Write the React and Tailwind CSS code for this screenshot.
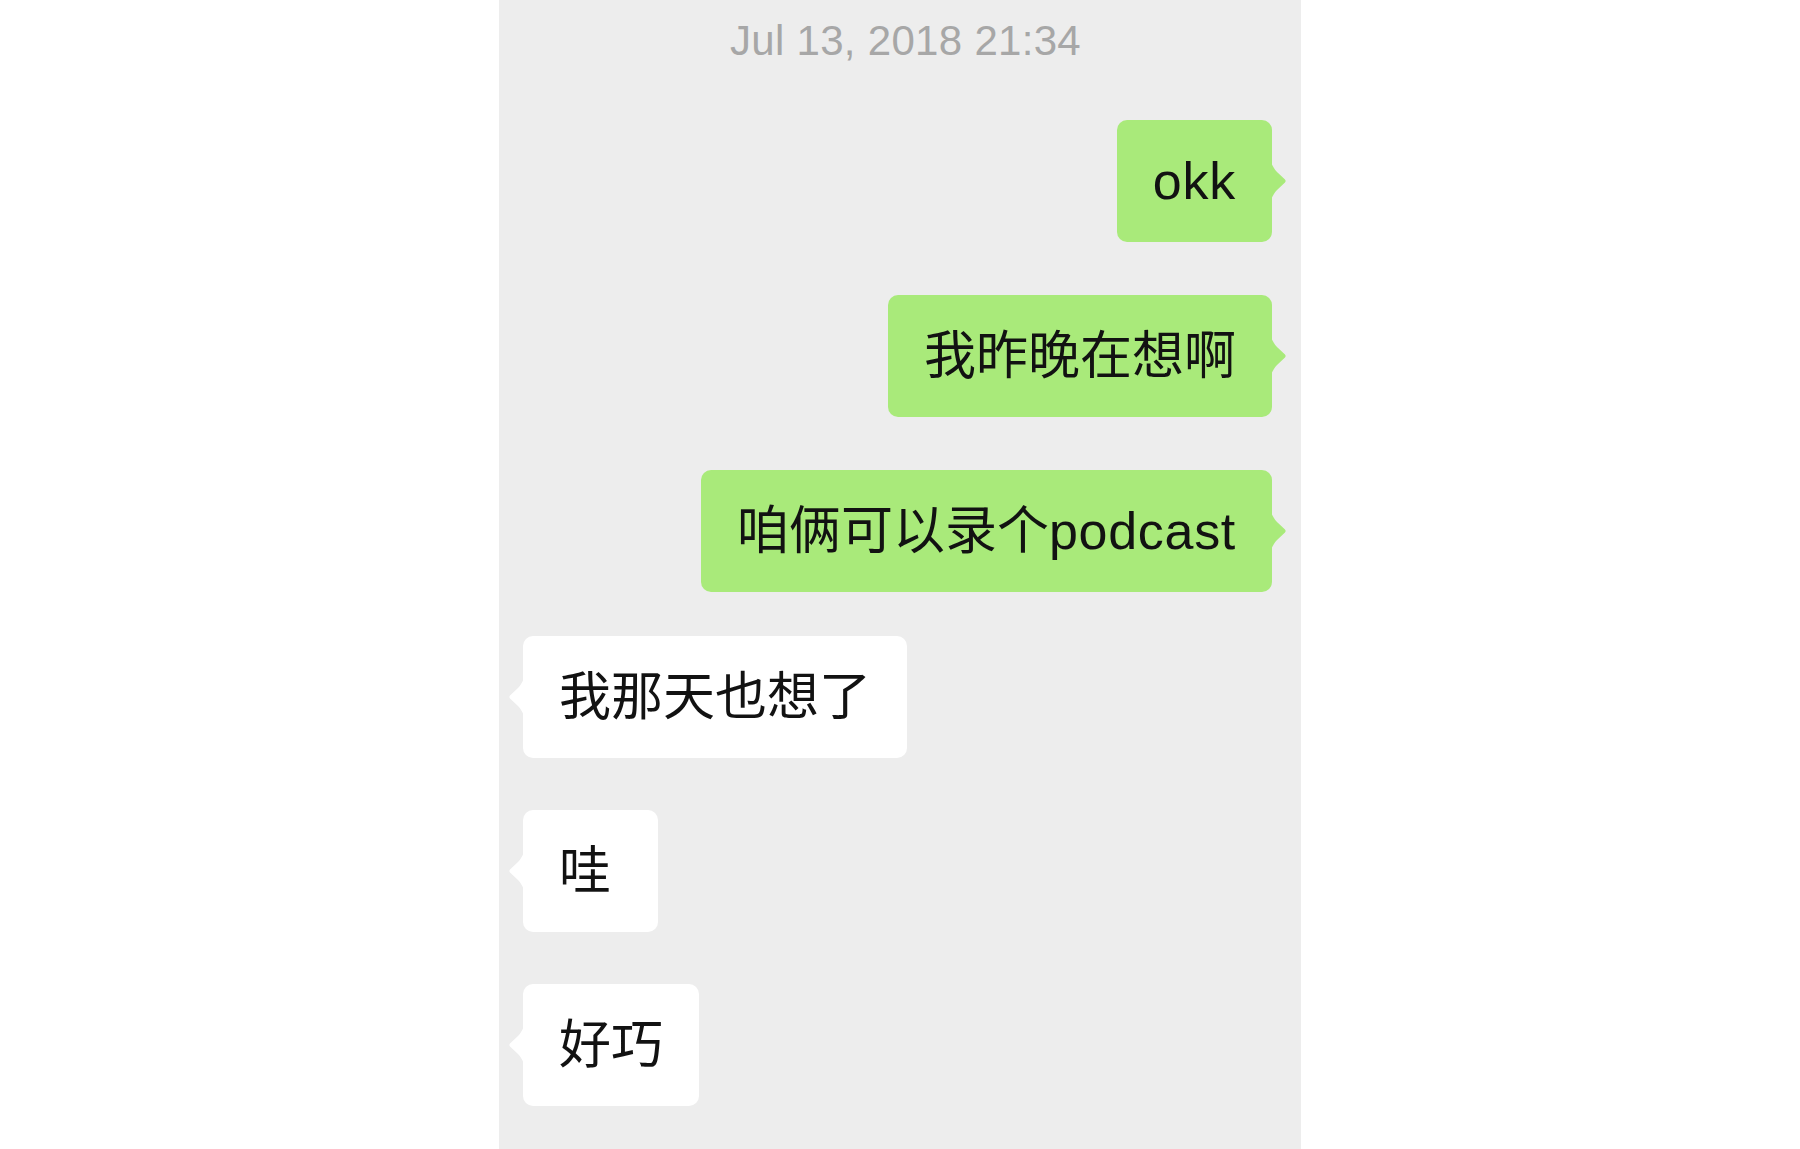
import React from "react";

const FONT = {
  fontFamily:
    '"Liberation Sans", "Noto Sans CJK SC", "Noto Sans", sans-serif',
};

function Tail({ side, color }) {
  if (side === "right") {
    return (
      <svg
        className="absolute top-1/2 -translate-y-1/2 right-[-15px]"
        width="16"
        height="38"
        viewBox="0 0 16 38"
      >
        <path
          d="M0 0 C1.5 4 3.5 7.5 6 10 L14 17.5 Q15.5 19 14 20.5 L6 28 C3.5 30.5 1.5 34 0 38 Z"
          fill={color}
        />
      </svg>
    );
  }
  return (
    <svg
      className="absolute top-1/2 -translate-y-1/2 left-[-15px]"
      width="16"
      height="38"
      viewBox="0 0 16 38"
    >
      <path
        d="M16 0 C14.5 4 12.5 7.5 10 10 L2 17.5 Q0.5 19 2 20.5 L10 28 C12.5 30.5 14.5 34 16 38 Z"
        fill={color}
      />
    </svg>
  );
}

function Sent({ children, mt }) {
  return (
    <div className={`flex justify-end pr-[29px] ${mt}`}>
      <div className="relative h-[122px] flex items-center px-[36px] rounded-[10px] bg-[#a9ea7a] text-[52px] leading-none text-[#121212] whitespace-nowrap">
        {children}
        <Tail side="right" color="#a9ea7a" />
      </div>
    </div>
  );
}

function Received({ children, mt }) {
  return (
    <div className={`flex justify-start pl-[24px] ${mt}`}>
      <div className="relative h-[122px] min-w-[135px] flex items-center px-[36px] rounded-[10px] bg-white text-[52px] leading-none text-[#121212] whitespace-nowrap">
        {children}
        <Tail side="left" color="#ffffff" />
      </div>
    </div>
  );
}

export default function App() {
  return (
    <div className="w-full h-[1149px] bg-white flex justify-center overflow-hidden" style={FONT}>
      <div className="w-[802px] h-full bg-[#ededed] flex flex-col">
        <div className="pt-[16px] pl-[11px] h-[120px] text-center text-[42px] leading-[50px] tracking-[0.3px] text-[#a7a7a7]">
          Jul 13, 2018 21:34
        </div>
        <Sent mt="mt-0">
          <span className="tracking-[0.8px]">okk</span>
        </Sent>
        <Sent mt="mt-[53px]">我昨晚在想啊</Sent>
        <Sent mt="mt-[53px]">
          咱俩可以录个<span className="tracking-[0.7px]">podcast</span>
        </Sent>
        <Received mt="mt-[44px]">我那天也想了</Received>
        <Received mt="mt-[52px]">哇</Received>
        <Received mt="mt-[52px]">好巧</Received>
      </div>
    </div>
  );
}
